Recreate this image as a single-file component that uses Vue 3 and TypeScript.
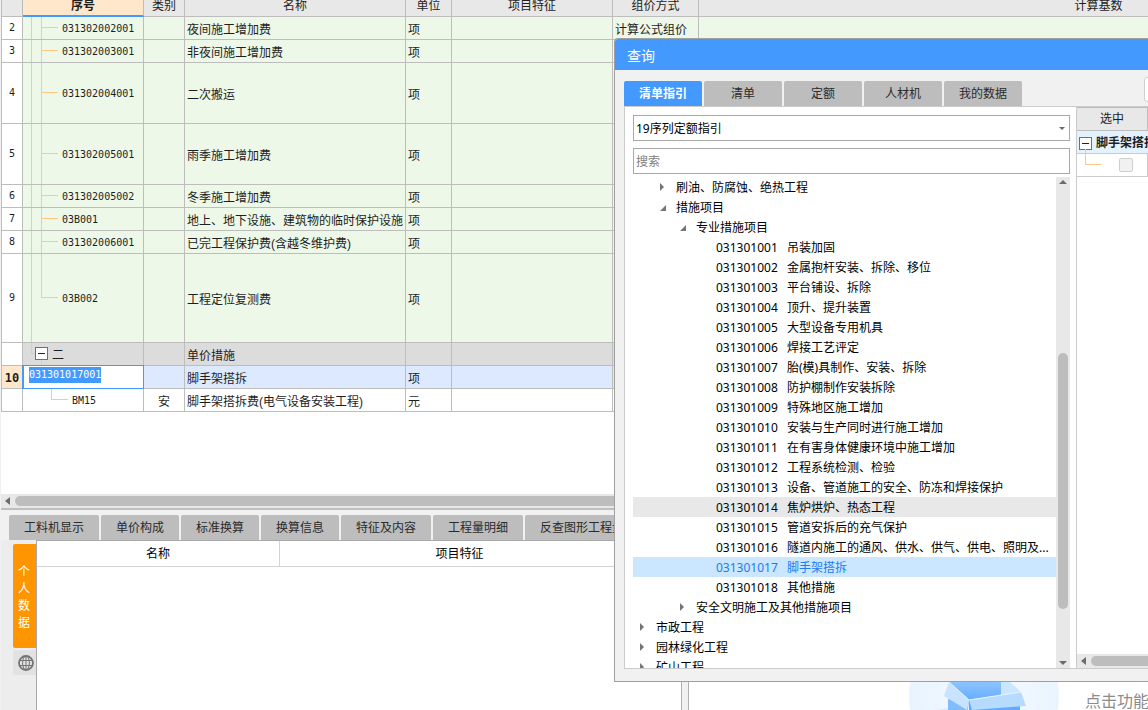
<script setup lang="ts">
import { onMounted, ref } from 'vue'

interface Item {
  no: string
  code: string
  kind: string
  name: string
  unit: string
  method?: string
  size?: 'mid' | 'tall'
  last?: boolean
}

interface Node {
  level: number
  text: string
  code?: string
  mark?: 'open' | 'closed'
  state?: 'hover' | 'active'
}

const items: Item[] = [
  { no: '2', code: '031302002001', kind: '', name: '夜间施工增加费', unit: '项', method: '计算公式组价' },
  { no: '3', code: '031302003001', kind: '', name: '非夜间施工增加费', unit: '项' },
  { no: '4', code: '031302004001', kind: '', name: '二次搬运', unit: '项', size: 'mid' },
  { no: '5', code: '031302005001', kind: '', name: '雨季施工增加费', unit: '项', size: 'mid' },
  { no: '6', code: '031302005002', kind: '', name: '冬季施工增加费', unit: '项' },
  { no: '7', code: '03B001', kind: '', name: '地上、地下设施、建筑物的临时保护设施', unit: '项' },
  { no: '8', code: '031302006001', kind: '', name: '已完工程保护费(含越冬维护费)', unit: '项' },
  { no: '9', code: '03B002', kind: '', name: '工程定位复测费', unit: '项', size: 'tall', last: true },
]

const nodes: Node[] = [
  { level: 1, text: '刷油、防腐蚀、绝热工程', mark: 'closed' },
  { level: 1, text: '措施项目', mark: 'open' },
  { level: 2, text: '专业措施项目', mark: 'open' },
  { level: 3, code: '031301001', text: '吊装加固' },
  { level: 3, code: '031301002', text: '金属抱杆安装、拆除、移位' },
  { level: 3, code: '031301003', text: '平台铺设、拆除' },
  { level: 3, code: '031301004', text: '顶升、提升装置' },
  { level: 3, code: '031301005', text: '大型设备专用机具' },
  { level: 3, code: '031301006', text: '焊接工艺评定' },
  { level: 3, code: '031301007', text: '胎(模)具制作、安装、拆除' },
  { level: 3, code: '031301008', text: '防护棚制作安装拆除' },
  { level: 3, code: '031301009', text: '特殊地区施工增加' },
  { level: 3, code: '031301010', text: '安装与生产同时进行施工增加' },
  { level: 3, code: '031301011', text: '在有害身体健康环境中施工增加' },
  { level: 3, code: '031301012', text: '工程系统检测、检验' },
  { level: 3, code: '031301013', text: '设备、管道施工的安全、防冻和焊接保护' },
  { level: 3, code: '031301014', text: '焦炉烘炉、热态工程', state: 'hover' },
  { level: 3, code: '031301015', text: '管道安拆后的充气保护' },
  { level: 3, code: '031301016', text: '隧道内施工的通风、供水、供气、供电、照明及...' },
  { level: 3, code: '031301017', text: '脚手架搭拆', state: 'active' },
  { level: 3, code: '031301018', text: '其他措施' },
  { level: 2, text: '安全文明施工及其他措施项目', mark: 'closed' },
  { level: 0, text: '市政工程', mark: 'closed' },
  { level: 0, text: '园林绿化工程', mark: 'closed' },
  { level: 0, text: '矿山工程', mark: 'closed' },
]

const detailTabs = ['工料机显示', '单价构成', '标准换算', '换算信息', '特征及内容', '工程量明细', '反查图形工程量']
const queryTabs = ['清单指引', '清单', '定额', '人材机', '我的数据']
const currentTab = ref('清单指引')
const library = ref('19序列定额指引')
const keyword = ref('')
const editedCode = ref('031301017001')
const codeInput = ref<HTMLInputElement | null>(null)

onMounted(() => {
  codeInput.value?.focus({ preventScroll: true })
  codeInput.value?.select()
})
</script>

<template>
  <main class="app" lang="zh-CN">
    <section class="items">
      <table class="grid">
        <colgroup>
          <col class="c-no" /><col class="c-code" /><col class="c-kind" /><col class="c-name" />
          <col class="c-unit" /><col class="c-feature" /><col class="c-method" /><col class="c-base" />
        </colgroup>
        <thead>
          <tr>
            <th></th>
            <th class="picked">序号</th>
            <th>类别</th>
            <th>名称</th>
            <th>单位</th>
            <th>项目特征</th>
            <th>组价方式</th>
            <th>计算基数</th>
          </tr>
        </thead>
        <tbody>
          <tr v-for="item in items" :key="item.no" class="green" :class="item.size">
            <td class="no">{{ item.no }}</td>
            <td class="code">
              <i class="rail outer"></i>
              <i class="rail inner" :class="{ half: item.last }"></i>
              <i class="branch"></i>
              {{ item.code }}
            </td>
            <td class="kind">{{ item.kind }}</td>
            <td>{{ item.name }}</td>
            <td>{{ item.unit }}</td>
            <td></td>
            <td>{{ item.method }}</td>
            <td></td>
          </tr>
          <tr class="group">
            <td class="no"></td>
            <td class="code section">
              <i class="rail outer half"></i>
              <i class="rail inner lower"></i>
              <i class="branch short"></i>
              <button class="toggle" type="button" aria-label="折叠"></button>
              二
            </td>
            <td></td>
            <td>单价措施</td>
            <td></td><td></td><td></td><td></td>
          </tr>
          <tr class="current">
            <td class="no">10</td>
            <td class="code">
              <input ref="codeInput" v-model="editedCode" class="edit" type="text" aria-label="序号" />
            </td>
            <td></td>
            <td>脚手架搭拆</td>
            <td>项</td>
            <td></td><td></td><td></td>
          </tr>
          <tr>
            <td class="no"></td>
            <td class="code child">
              <i class="rail deep half"></i>
              <i class="branch deep"></i>
              BM15
            </td>
            <td class="kind">安</td>
            <td>脚手架搭拆费(电气设备安装工程)</td>
            <td>元</td>
            <td></td><td></td><td></td>
          </tr>
        </tbody>
      </table>
      <div class="hbar">
        <span class="arrow-left"></span>
        <span class="hthumb"></span>
      </div>
    </section>

    <section class="details">
      <div class="details-main">
        <nav class="tabs detail-tabs">
          <button v-for="tab in detailTabs" :key="tab" type="button" class="tab">{{ tab }}</button>
        </nav>
        <div class="details-body">
          <aside class="side">
            <button type="button" class="personal">个人数据</button>
            <button type="button" class="globe" aria-label="网络数据">
              <svg viewBox="0 0 16 16" width="16" height="16" fill="none" stroke="#757575">
                <circle cx="8" cy="8" r="7" stroke-width="1.8" />
                <ellipse cx="8" cy="8" rx="3.4" ry="7" />
                <path d="M8 1v14M1.6 5.5h12.8M1.6 10.5h12.8" />
              </svg>
            </button>
          </aside>
          <table class="features">
            <colgroup><col class="f-name" /><col class="f-feature" /><col /></colgroup>
            <thead>
              <tr><th>名称</th><th>项目特征</th><th></th></tr>
            </thead>
          </table>
        </div>
      </div>
      <div class="splitter"></div>
      <div class="empty">
        <svg class="box-art" viewBox="0 0 150 28" width="150" height="28">
          <defs>
            <linearGradient id="halo" x1="0" x2="1">
              <stop offset="0" stop-color="#e7f3ff" />
              <stop offset="0.5" stop-color="#f6faff" />
              <stop offset="1" stop-color="#e9f4ff" />
            </linearGradient>
            <linearGradient id="inside" x1="0" y1="0" x2="0" y2="1">
              <stop offset="0" stop-color="#8cc4ff" />
              <stop offset="1" stop-color="#66adff" />
            </linearGradient>
          </defs>
          <circle cx="75" cy="14" r="75" fill="url(#halo)" />
          <path d="M27 28l12-2v2z" fill="#d5eaff" />
          <path d="M39 17v11h20l1-10z" fill="#80bdff" />
          <path d="M60 18l51 4v6H60z" fill="#61aaff" />
          <path d="M40 0h52v13l-32 5z" fill="url(#inside)" />
          <path d="M92 0h9l11 10-20 3z" fill="#cce6ff" />
          <path d="M40 0l-5 14 23 14 2-10z" fill="#c7e3ff" />
          <path d="M60 18l52-8 5 14-54 4z" fill="#b6dbff" />
          <path d="M40 0l20 18 52-8" fill="none" stroke="#e6f3ff" />
        </svg>
        <p class="tip">点击功能区按钮</p>
      </div>
    </section>

    <section class="dialog" role="dialog" aria-label="查询">
      <header class="title">查询</header>
      <div class="dialog-body">
        <nav class="tabs">
          <button
            v-for="tab in queryTabs"
            :key="tab"
            type="button"
            class="tab"
            :class="{ on: tab === currentTab }"
            @click="currentTab = tab"
          >{{ tab }}</button>
          <button type="button" class="action" aria-label="操作"></button>
        </nav>
        <div class="panes">
          <div class="guide">
            <div class="combo">
              <select v-model="library" class="field" aria-label="定额库">
                <option>19序列定额指引</option>
              </select>
              <span class="drop"></span>
            </div>
            <input v-model="keyword" class="field search" type="text" placeholder="搜索" aria-label="搜索" />
            <div class="tree-wrap">
              <ul class="tree" role="tree">
                <li
                  v-for="node in nodes"
                  :key="node.text"
                  role="treeitem"
                  :class="['level-' + node.level, node.state]"
                >
                  <span v-if="node.mark" class="mark" :class="node.mark"></span>
                  <span v-if="node.code" class="num">{{ node.code }}</span>
                  <span>{{ node.text }}</span>
                </li>
              </ul>
              <div class="vbar">
                <span class="arrow-up"></span>
                <span class="vthumb"></span>
                <span class="arrow-down"></span>
              </div>
            </div>
          </div>
          <div class="result">
            <table class="picks">
              <thead><tr><th>选中</th></tr></thead>
              <tbody>
                <tr class="pick-group">
                  <td>
                    <div class="pick-line">
                      <button class="toggle" type="button" aria-label="折叠"></button>
                      <b>脚手架搭拆</b>
                    </div>
                  </td>
                </tr>
                <tr>
                  <td>
                    <i class="elbow"></i>
                    <input type="checkbox" class="check" disabled aria-label="选中" />
                  </td>
                </tr>
              </tbody>
            </table>
            <div class="hbar small">
              <span class="arrow-left"></span>
              <span class="hthumb"></span>
            </div>
          </div>
        </div>
      </div>
    </section>
  </main>
</template>

<style>
html,
body,
#app {
  height: 100%;
}
body {
  margin: 0;
  overflow: hidden;
}
</style>

<style scoped>
* {
  box-sizing: border-box;
}
.app {
  position: relative;
  display: flex;
  flex-direction: column;
  height: 100%;
  overflow: hidden;
  background: #f1f1f1;
  color: #1e1e1e;
  font: 12px/16px 'Liberation Sans', 'Noto Sans CJK SC', sans-serif;
}
button,
input,
select {
  font: inherit;
  color: inherit;
  margin: 0;
  padding: 0;
  border: 0;
  border-radius: 0;
  background: none;
  outline: none;
}

/* item grid */
.items {
  flex: 1;
  min-height: 0;
  margin-left: 1px;
  display: flex;
  flex-direction: column;
  overflow: hidden;
  background: #fff;
  border-bottom: 2px solid #bfbfbf;
}
.grid {
  table-layout: fixed;
  width: 1498px;
  border-collapse: separate;
  border-spacing: 0;
  border-left: 1px solid #bdbdbd;
}
.c-no { width: 21px; }
.c-code { width: 121px; }
.c-kind { width: 41px; }
.c-name { width: 221px; }
.c-unit { width: 46px; }
.c-feature { width: 161px; }
.c-method { width: 86px; }
.grid th {
  height: 17px;
  padding: 0 0 4px;
  line-height: 12px;
  font-weight: 400;
  background: #e8e8e8;
  border-right: 1px solid #bdbdbd;
  border-bottom: 1px solid #bdbdbd;
}
.grid th.picked {
  padding-bottom: 3px;
  background: #ffe7cb;
  border-bottom: 2px solid #4499ff;
  font-weight: 700;
}
.grid td {
  position: relative;
  height: 23px;
  padding: 4px 0 0 2px;
  line-height: 16px;
  white-space: nowrap;
  border-right: 1px solid #bdbdbd;
  border-bottom: 1px solid #bdbdbd;
}
.mid td { height: 61px; }
.tall td { height: 89px; }
.green td { background: #edf8e8; }
.group td { background: #dcdcdc; }
.current td { background: #dde9fe; }
.grid td.no {
  padding: 0;
  text-align: center;
  font-size: 10px;
  font-family: 'DejaVu Sans Mono', monospace;
  background: #fff;
}
.current td.no {
  padding-top: 1px;
  font-size: 12px;
  font-weight: 700;
  background: #ffe7cb;
}
.grid td.kind {
  padding-left: 0;
  text-align: center;
}
.grid td.code {
  padding-top: 2px;
  padding-left: 39px;
  font-size: 10px;
  font-family: 'DejaVu Sans Mono', 'Noto Sans CJK SC', monospace;
}
.grid td.section {
  padding-left: 29px;
  font-size: 12px;
}
.grid td.child {
  padding-left: 49px;
}
.rail {
  position: absolute;
  top: 0;
  bottom: 0;
  border-left: 1px solid #ffc880;
}
.rail.outer { left: 8px; }
.rail.inner { left: 18px; }
.rail.deep { left: 28px; }
.rail.half { bottom: 50%; }
.rail.lower { top: 50%; }
.branch {
  position: absolute;
  left: 18px;
  bottom: 50%;
  width: 17px;
  border-top: 1px solid #ffc880;
}
.branch.short {
  left: 8px;
  width: 6px;
}
.branch.deep { left: 28px; }
.toggle {
  flex: none;
  width: 13px;
  height: 13px;
  border: 1px solid #707070;
  background: linear-gradient(#222, #222) center / 7px 1px no-repeat #fff;
}
.section .toggle {
  position: absolute;
  left: 12px;
  top: 4px;
}
.edit {
  position: absolute;
  inset: -1px -1px -1px -1px;
  width: auto;
  padding: 0 0 4px 5px;
  border: 1px solid #4499ff;
  border-left-width: 2px;
  background: #fff;
}
.edit::selection {
  background: #4499ff;
  color: #fff;
}
.hbar {
  display: flex;
  align-items: center;
  gap: 5px;
  height: 14px;
  margin-top: auto;
  padding-left: 4px;
  background: #e8e8e8;
}
.arrow-left {
  flex: none;
  border: 4px solid transparent;
  border-left: 0;
  border-right: 5px solid #6b6b6b;
}
.hthumb {
  flex: 1;
  height: 10px;
  border-radius: 5px 0 0 5px;
  background: #bdbdbd;
}

/* detail area */
.details {
  display: flex;
  height: 200px;
  margin-left: 1px;
}
.details-main {
  width: 680px;
  display: flex;
  flex-direction: column;
}
.tabs {
  display: flex;
  gap: 2px;
}
.detail-tabs {
  padding: 5px 0 0 8px;
  overflow: hidden;
}
.tab {
  flex: none;
  min-width: 78px;
  height: 25px;
  padding: 0 15px;
  border-radius: 2px 2px 0 0;
  background: #bdbdbd;
  color: #2a2a2a;
  text-align: center;
}
.tab.on {
  background: #4499ff;
  color: #fff;
  font-weight: 700;
}
.details-body {
  flex: 1;
  display: flex;
  background: linear-gradient(90deg, #ededed 35px, #a9a9a9 35px, #a9a9a9 36px, #fff 36px);
}
.side {
  display: flex;
  flex-direction: column;
  gap: 2px;
  width: 35px;
  padding: 4px 0 0 12px;
}
.personal {
  height: 104px;
  padding: 4px 6px 0 5px;
  border-radius: 2px 0 0 2px;
  background: #ff9500;
  color: #fff;
  line-height: 17px;
  overflow-wrap: anywhere;
}
.globe {
  display: flex;
  align-items: center;
  justify-content: center;
  height: 25px;
  padding-left: 3px;
  border-radius: 2px 0 0 2px;
  background: #e2e2e2;
}
.features {
  flex: 1;
  align-self: flex-start;
  table-layout: fixed;
  border-collapse: separate;
  border-spacing: 0;
  background: #fff;
  border-top: 1px solid #a9a9a9;
  border-left: 1px solid #a9a9a9;
}
.f-name { width: 243px; }
.f-feature { width: 360px; }
.features th {
  height: 26px;
  padding: 0;
  vertical-align: middle;
  font-weight: 400;
  color: #000;
  border-right: 1px solid #d3d3d3;
  border-bottom: 1px solid #d3d3d3;
}
.splitter {
  width: 8px;
  margin-top: 30px;
  border: solid #b0b0b0;
  border-width: 0 1px;
  background: #f1f1f1;
}
.empty {
  flex: 1;
  display: flex;
  align-items: flex-end;
  gap: 26px;
  padding-left: 220px;
  background: #fff;
  overflow: hidden;
}
.box-art {
  flex: none;
}
.tip {
  margin: 0;
  white-space: nowrap;
  font-size: 16px;
  line-height: 16px;
  color: #8c8c8c;
}

/* query window */
.dialog {
  position: absolute;
  left: 614px;
  top: 38px;
  right: 0;
  bottom: 28px;
  display: flex;
  flex-direction: column;
  border: 1px solid #a0a0a0;
  border-right: 0;
  border-radius: 4px 0 0 0;
  background: #f1f1f1;
  overflow: hidden;
  font-family: 'Noto Sans', 'Noto Sans CJK SC', sans-serif;
}
.title {
  height: 31px;
  padding: 1px 0 0 12px;
  background: #4499ff;
  color: #fff;
  font-size: 14px;
  line-height: 32px;
}
.dialog-body {
  flex: 1;
  min-height: 0;
  display: flex;
  flex-direction: column;
  padding: 0 0 12px 9px;
}
.dialog .tabs {
  flex: none;
  overflow: hidden;
  align-items: flex-end;
  height: 36px;
}
.action {
  flex: none;
  width: 24px;
  height: 25px;
  margin: 0 -20px 4px auto;
  border: 1px solid #cfcfcf;
  border-radius: 3px;
  background: #fff;
}
.panes {
  flex: 1;
  min-height: 0;
  display: flex;
  border: solid #cbcbcb;
  border-width: 1px 0 1px 1px;
  background: #fff;
}
.guide {
  flex: 1;
  min-width: 0;
  display: flex;
  flex-direction: column;
  padding: 8px 6px 0 8px;
  color: #000;
}
.combo {
  position: relative;
  display: flex;
  margin-bottom: 7px;
}
.field {
  flex: none;
  width: 100%;
  height: 26px;
  padding: 1px 2px 0;
  border: 1px solid #a8a8a8;
  background: #fff;
  appearance: none;
}
.search::placeholder {
  color: #808080;
  opacity: 1;
}
.drop {
  position: absolute;
  right: 5px;
  top: 12px;
  border: 3px solid transparent;
  border-bottom: 0;
  border-top-color: #6b6b6b;
  pointer-events: none;
}
.tree-wrap {
  flex: 1;
  min-height: 0;
  display: flex;
  margin-top: 3px;
}
.tree {
  flex: 1;
  min-width: 0;
  margin: 0;
  padding: 0;
  list-style: none;
  overflow: hidden;
}
.tree li {
  display: flex;
  height: 20px;
  line-height: 22px;
  white-space: nowrap;
}
.tree .level-0 { padding-left: 7px; }
.tree .level-1 { padding-left: 27px; }
.tree .level-2 { padding-left: 47px; }
.tree .level-3 { padding-left: 83px; }
.tree .hover { background: #e8e8e8; }
.tree .active {
  background: #cbe6ff;
  color: #1a7cf0;
}
.num {
  width: 71px;
}
.mark {
  width: 16px;
}
.mark::before {
  content: '';
  display: block;
  width: 0;
}
.mark.closed::before {
  margin-top: 6px;
  border: 4px solid transparent;
  border-right: 0;
  border-left-color: #757575;
}
.tree .mark.open::before {
  margin-top: 8px;
  border: 3px solid #757575;
  border-top-color: transparent;
  border-left-color: transparent;
}
.vbar {
  display: flex;
  flex-direction: column;
  align-items: center;
  width: 14px;
  padding: 3px 0;
  background: #e8e8e8;
}
.arrow-up {
  border: 4px solid transparent;
  border-top: 0;
  border-bottom-color: #6b6b6b;
}
.vthumb {
  width: 10px;
  height: 256px;
  margin: auto 0 52px;
  border-radius: 5px;
  background: #bdbdbd;
}
.arrow-down {
  border: 4px solid transparent;
  border-bottom: 0;
  border-top-color: #6b6b6b;
}
.result {
  width: 72px;
  display: flex;
  flex-direction: column;
  overflow: hidden;
  border-left: 1px solid #cbcbcb;
}
.picks {
  width: 100%;
  table-layout: fixed;
  border-collapse: separate;
  border-spacing: 0;
}
.picks th {
  height: 24px;
  padding: 0;
  font-weight: 400;
  background: #e8e8e8;
  border: solid #bdbdbd;
  border-width: 1px 1px 1px 0;
}
.picks td {
  position: relative;
  height: 23px;
  padding: 0;
  border: solid #cbcbcb;
  border-width: 0 1px 1px 0;
}
.pick-group td {
  background: #e3f2ff;
  border-right: 0;
}
.pick-line {
  display: flex;
  align-items: center;
  gap: 4px;
  padding: 2px 0 0 2px;
  white-space: nowrap;
}
.elbow {
  position: absolute;
  left: 8px;
  top: -5px;
  width: 16px;
  height: 16px;
  border: solid #ffc880;
  border-width: 0 0 1px 1px;
}
.check {
  display: block;
  appearance: none;
  width: 14px;
  height: 14px;
  margin-left: 42px;
  border: 1px solid #cfcfcf;
  border-radius: 2px;
  background: #f1f1f1;
}
</style>
